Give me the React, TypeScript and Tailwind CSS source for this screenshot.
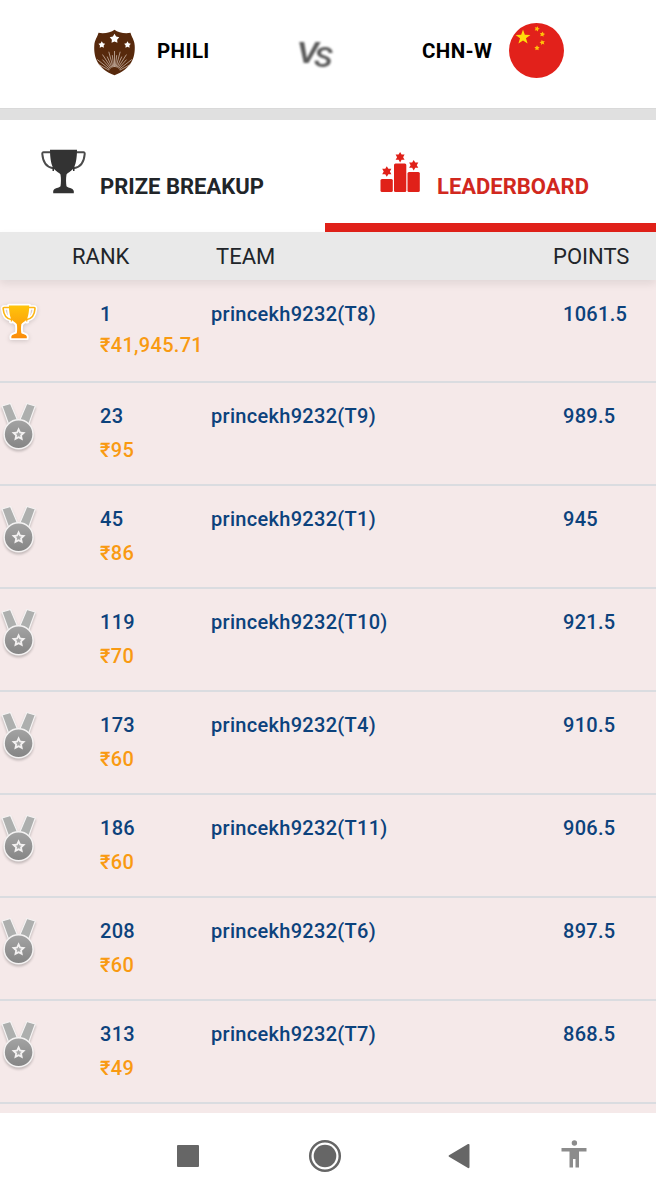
import React from "react"

type Entry = {
  rank: string
  prize: string
  team: string
  points: string
}

const entries: Entry[] = [
  { rank: "1", prize: "₹41,945.71", team: "princekh9232(T8)", points: "1061.5" },
  { rank: "23", prize: "₹95", team: "princekh9232(T9)", points: "989.5" },
  { rank: "45", prize: "₹86", team: "princekh9232(T1)", points: "945" },
  { rank: "119", prize: "₹70", team: "princekh9232(T10)", points: "921.5" },
  { rank: "173", prize: "₹60", team: "princekh9232(T4)", points: "910.5" },
  { rank: "186", prize: "₹60", team: "princekh9232(T11)", points: "906.5" },
  { rank: "208", prize: "₹60", team: "princekh9232(T6)", points: "897.5" },
  { rank: "313", prize: "₹49", team: "princekh9232(T7)", points: "868.5" },
]

const star = (cx: number, cy: number, r: number, inner = 0.4, n = 5, turn = 0) =>
  Array.from({ length: n * 2 }, (_, i) => {
    const a = -Math.PI / 2 + turn + (i * Math.PI) / n
    const d = i % 2 ? r * inner : r
    return `${(cx + d * Math.cos(a)).toFixed(2)},${(cy + d * Math.sin(a)).toFixed(2)}`
  }).join(" ")

const rays = [-62, -52, -42, -33, -24, -15, -7, 0, 7, 15, 24, 33, 42, 52, 62]

const PhiliLogo = () => (
  <svg className="h-[47px] w-[43px]" viewBox="0 0 43 47">
    <path
      d="M21.5 .8C25 3.500 32 5 37.500 3.800C38.500 8 41.500 11 41.700 16.500C42.500 29 38 40 21.500 46.200C5 40 .5 29 1.300 16.500C1.500 11 4.500 8 5.500 3.800C11 5 18 3.500 21.500 .8Z"
      fill="#57290c"
    />
    {rays.map((deg, i) => {
      const a = (deg * Math.PI) / 180
      const len = i % 2 ? 22 : 18
      return (
        <line
          key={deg}
          x1={21.5 + 6 * Math.sin(a)}
          y1={44 - 6 * Math.cos(a)}
          x2={21.5 + len * Math.sin(a)}
          y2={44 - len * Math.cos(a)}
          stroke="#d9c7bb"
          strokeWidth="0.7"
        />
      )
    })}
    <polygon points={star(21.5, 9.8, 5, 0.55)} fill="#fff" />
    <polygon points={star(8.8, 15.8, 3.5, 0.55)} fill="#fff" />
    <polygon points={star(34.500, 15.8, 3.5, 0.55)} fill="#fff" />
  </svg>
)

const ChinaFlag = () => (
  <svg className="size-[55px]" viewBox="0 0 55 55">
    <circle cx="27.5" cy="27.5" r="27.5" fill="#e2211b" />
    <polygon points={star(14, 14.3, 7.8, 0.4)} fill="#ffdd0a" />
    <polygon points={star(28, 5.8, 2.8, 0.5, 5, 0.3)} fill="#ffc20a" />
    <polygon points={star(33.3, 11.3, 2.8, 0.5, 5, 0.2)} fill="#ffc20a" />
    <polygon points={star(33.3, 19.5, 2.8, 0.5, 5, -0.2)} fill="#ffc20a" />
    <polygon points={star(28, 25, 2.8, 0.5)} fill="#ffc20a" />
  </svg>
)

const cup =
  "M9 .7H36C36 8 35 14 33.500 17.500V22H32V20C29.500 22.500 26.500 24 25.500 25.500C24.800 30 25 34 25.500 37.200C26.500 39 32 38.500 32.800 42V44.300H12.200V42C13 38.500 18.500 39 19.500 37.200C20 34 20.200 30 19.500 25.500C18.500 24 15.500 22.500 13 20V22H11.500V17.500C10 14 9 8 9 .7Z"
const handles =
  "M9.500 3.300H2.500Q1.200 3.300 1.300 5C2 14 6 18.300 12 19.300M35.500 3.300H42.500Q43.800 3.300 43.700 5C43 14 39 18.300 33 19.300"

const DarkTrophy = () => (
  <svg className="h-[45px] w-[45px]" viewBox="0 0 45 45">
    <path d={handles} fill="none" stroke="#4b4b4b" strokeWidth="2" />
    <path d={cup} fill="#333" />
  </svg>
)

const GoldTrophy = () => (
  <svg className="h-[50px] w-10 drop-shadow-sm" viewBox="0 0 40 50">
    <defs>
      <linearGradient id="gold" x1="0" y1="0" x2="0" y2="1">
        <stop offset="0" stopColor="#ffc40a" />
        <stop offset="1" stopColor="#fb8c0b" />
      </linearGradient>
    </defs>
    <g transform="translate(2.2 4) scale(.75)" strokeLinejoin="round">
      <path d={handles} fill="none" stroke="#fff" strokeWidth="6" />
      <path d={cup} fill="#fff" stroke="#fff" strokeWidth="5" />
      <path d={handles} fill="none" stroke="#fdb515" strokeWidth="2.2" />
      <path d={cup} fill="url(#gold)" />
    </g>
  </svg>
)

const Medal = () => (
  <svg className="h-[50px] w-10 drop-shadow-[0_2px_1px_rgba(0,0,0,0.2)]" viewBox="0 0 40 50">
    <defs>
      <linearGradient id="silver" x1="0" y1="0" x2="0" y2="1">
        <stop offset="0" stopColor="#a3a3a3" />
        <stop offset="1" stopColor="#858585" />
      </linearGradient>
    </defs>
    <g fill="#adafae" stroke="#f5f3f3" strokeWidth="1.2" strokeLinejoin="round">
      <path d="M2 3L10.500 .5L17.500 17L8.500 21Z" />
      <path d="M35.300 3L26.800 .5L19.800 17L28.800 21Z" />
    </g>
    <circle cx="18.600" cy="31.200" r="14.500" fill="url(#silver)" stroke="#f5f3f3" strokeWidth="1.5" />
    <polygon points={star(18.6, 31.6, 7.4, 0.48)} fill="#f3f1f1" />
    <polygon points={star(18.6, 31.6, 3.1, 0.5)} fill="#a8a8a8" />
  </svg>
)

const Podium = () => (
  <svg className="h-[42px] w-10" viewBox="0 0 40 42" fill="#e02119">
    <rect x=".5" y="27" width="12.300" height="13" rx="1.500" />
    <rect x="14" y="11.500" width="12.300" height="28.500" rx="1.500" />
    <rect x="27.500" y="20" width="12.300" height="20" rx="1.500" />
    <polygon points={star(6.8, 19.5, 5.300, 0.58, 6)} />
    <polygon points={star(20.1, 5.2, 5.200, 0.58, 6)} />
    <polygon points={star(33.700, 13.2, 5.300, 0.58, 6)} />
  </svg>
)

const Row = ({ entry, first }: { entry: Entry; first: boolean }) => (
  <div
    className={`flex items-start border-b-2 border-[#dadce0] pt-[21px] text-[20px] leading-6 font-medium tracking-[0.3px] text-[#0c427c] ${
      first ? "h-[102px]" : "h-[103px]"
    }`}
  >
    <div className="-mt-px w-[100px] shrink-0">{first ? <GoldTrophy /> : <Medal />}</div>
    <div className="w-[111px] shrink-0">
      <div>{entry.rank}</div>
      <div className={`whitespace-nowrap text-[#f99a12] ${first ? "mt-[7px]" : "mt-[10px]"}`}>{entry.prize}</div>
    </div>
    <div className="w-[352px] shrink-0">{entry.team}</div>
    <div>{entry.points}</div>
  </div>
)

export default function App() {
  return (
    <div className="flex h-[1200px] w-[656px] flex-col overflow-hidden bg-white font-['Roboto',sans-serif] text-[#212529]">
      <header className="flex h-[108px] shrink-0 items-start text-[20.5px] font-bold tracking-[0.4px] text-black">
        <div className="mt-[29px] ml-[93px] flex h-[47px] w-[206px] items-center">
          <PhiliLogo />
          <span className="ml-[21px] -mt-0.5">PHILI</span>
        </div>
        <div className="mt-[38px] flex w-[123px] origin-left scale-x-115 text-[30px] leading-none font-semibold tracking-normal text-[#5a5a5a] italic blur-[0.8px]">
          <span className="-ml-0.5 w-[15px]">V</span>
          <span className="mt-[7px] text-[27px]">S</span>
        </div>
        <div className="mt-[23px] flex items-center">
          <span className="mt-px w-[87px]">CHN-W</span>
          <ChinaFlag />
        </div>
      </header>
      <div className="h-3 shrink-0 border-t border-[#d9d9d9] bg-[#e0e0e0]" />

      <nav className="flex h-28 shrink-0 text-[22px] leading-7 font-bold">
        <div className="flex w-[325px] items-start">
          <div className="mt-[29px] ml-[41px] w-[59px]">
            <DarkTrophy />
          </div>
          <span className="mt-[53px]">PRIZE BREAKUP</span>
        </div>
        <div className="flex flex-1 items-start border-b-9 border-[#e02119] text-[#d1281e]">
          <div className="mt-8 ml-[55px] w-[57px]">
            <Podium />
          </div>
          <span className="mt-[53px]">LEADERBOARD</span>
        </div>
      </nav>

      <div className="z-10 flex h-12 shrink-0 items-center bg-[#e9e9e9] pl-[72px] text-[22px] shadow-[0_4px_8px_rgba(0,0,0,0.08)]">
        <span className="w-[144px]">RANK</span>
        <span className="w-[337px]">TEAM</span>
        <span>POINTS</span>
      </div>

      <main className="flex-1 overflow-hidden bg-[#f5e9e9] pt-px">
        {entries.map((entry, index) => (
          <Row key={entry.rank} entry={entry} first={index === 0} />
        ))}
      </main>

      <footer className="flex h-[87px] shrink-0 items-center bg-white pb-0.5 pl-[177px] text-[#666]">
        <div className="size-[22px] rounded-[1px] bg-[#666]" />
        <svg className="ml-[109px] size-[34px]" viewBox="0 0 34 34">
          <circle cx="17" cy="17" r="14.800" fill="none" stroke="currentColor" strokeWidth="2.500" />
          <circle cx="17" cy="17" r="11.300" fill="currentColor" />
        </svg>
        <svg className="ml-[106px] h-[26px] w-[22px]" viewBox="0 0 22 26">
          <path d="M1 12.200L20 1Q21.500 .5 21.500 2V24Q21.500 25.500 20 25L1 13.800Q0 13 1 12.200Z" fill="currentColor" />
        </svg>
        <svg className="ml-[91px] -mt-1 h-[28px] w-[26px]" viewBox="0 0 26 28" fill="#8c8c8c">
          <circle cx="13.400" cy="3" r="2.700" />
          <path d="M.5 8H25.500V11.500H18V27.500H14.500V19H12V27.500H8.500V11.500H.5Z" />
        </svg>
      </footer>
    </div>
  )
}
